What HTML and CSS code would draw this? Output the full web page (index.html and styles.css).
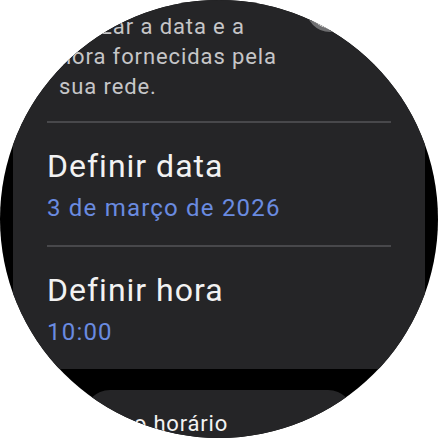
FILE: index.html
```html
<!DOCTYPE html>
<html lang="pt">
<head>
<meta charset="utf-8">
<title>Data e hora</title>
<link rel="stylesheet" href="styles.css">
</head>
<body>
<div class="watch">
  <div class="list">
    <section class="card">
      <div class="toggle" aria-hidden="true"></div>
      <p class="desc">Utilizar a data e a hora fornecidas pela sua rede.</p>
      <hr class="divider">
      <div class="item">
        <div class="title">Definir data</div>
        <div class="value">3 de março de 2026</div>
      </div>
      <hr class="divider">
      <div class="item">
        <div class="title">Definir hora</div>
        <div class="value">10:00</div>
      </div>
    </section>
    <div class="chip">Fuso horário</div>
  </div>
</div>
</body>
</html>
```

FILE: styles.css
```css
html, body {
  margin: 0;
  padding: 0;
  background: #ffffff;
}

body {
  font-family: Roboto, "Noto Sans", sans-serif;
}

.watch {
  width: 438px;
  height: 438px;
  border-radius: 50%;
  overflow: hidden;
  background: #000000;
}

.list {
  display: flex;
  flex-direction: column;
  align-items: center;
  gap: 21px;
}

.card {
  position: relative;
  box-sizing: border-box;
  width: 412px;
  background: #252527;
  border-radius: 0 0 26px 26px;
  padding: 12px 34px 22px;
}

.toggle {
  position: absolute;
  left: 293px;
  top: -16px;
  width: 40px;
  height: 40px;
  border-radius: 50%;
  background: #ffffff;
  border: 4px solid #6f6f71;
}

.desc {
  margin: 0 0 19px;
  padding-left: 12px;
  width: 226px;
  font-size: 22px;
  line-height: 30px;
  letter-spacing: 0.9px;
  color: #c6c6c8;
}

.divider {
  margin: 0;
  border: 0;
  height: 2px;
  background: #48484b;
}

.item {
  display: flex;
  flex-direction: column;
  gap: 8px;
  padding-top: 24px;
}

.item + .divider {
  margin-top: 22px;
}

.title {
  font-size: 32px;
  line-height: 38px;
  letter-spacing: 1px;
  color: #f2f2f2;
}

.value {
  font-size: 24px;
  line-height: 30px;
  letter-spacing: 1.2px;
  color: #6a8be0;
}

.chip {
  box-sizing: border-box;
  width: 270px;
  height: 52px;
  border-radius: 26px;
  background: #252527;
  padding: 19px 0 0 12px;
  font-size: 22px;
  line-height: 30px;
  letter-spacing: 0.8px;
  color: #f2f2f2;
}
```
